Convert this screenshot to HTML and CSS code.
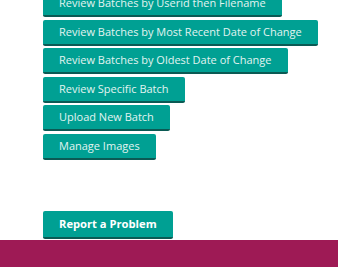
FILE: index.html
```html
<!DOCTYPE html>
<html>
<head>
<meta charset="utf-8">
<link rel="stylesheet" href="styles.css">
</head>
<body>
<div class="page">
  <nav class="menu">
    <a class="btn" href="#">Review Batches by Userid then Filename</a>
    <a class="btn" href="#">Review Batches by Most Recent Date of Change</a>
    <a class="btn" href="#">Review Batches by Oldest Date of Change</a>
    <a class="btn" href="#">Review Specific Batch</a>
    <a class="btn" href="#">Upload New Batch</a>
    <a class="btn" href="#">Manage Images</a>
  </nav>
  <div class="report-wrap">
    <a class="btn btn-report" href="#">Report a Problem</a>
  </div>
</div>
<footer class="footer"></footer>
</body>
</html>
```
FILE: styles.css
```css
html, body {
  margin: 0;
  padding: 0;
  background: #ffffff;
  overflow: hidden;
}
body {
  font-family: "Open Sans", "DejaVu Sans", sans-serif;
}
.page {
  padding-left: 43px;
  margin-top: -9px;
}
.menu {
  display: flex;
  flex-direction: column;
  align-items: flex-start;
  gap: 2.5px;
}
.btn {
  display: block;
  box-sizing: border-box;
  height: 26px;
  line-height: 24px;
  padding: 0 16px;
  background: #00a093;
  border-bottom: 2px solid #0b5a54;
  border-radius: 2px;
  color: #e2f4f1;
  font-size: 11px;
  text-decoration: none;
  white-space: nowrap;
}
.report-wrap {
  display: flex;
  padding-top: 51px;
  padding-bottom: 1px;
}
.btn-report {
  height: 28px;
  line-height: 26px;
  font-size: 11.2px;
  font-weight: 700;
  color: #ffffff;
}
.footer {
  height: 30px;
  background: #9e1a55;
}
```
